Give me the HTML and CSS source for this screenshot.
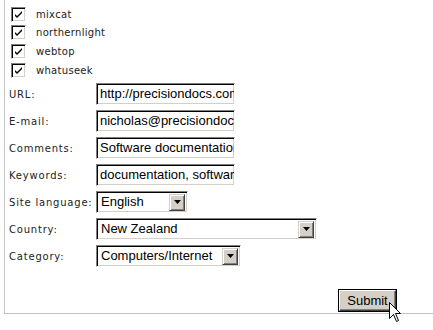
FILE: index.html
```html
<!DOCTYPE html>
<html lang="en">
<head>
    <meta charset="UTF-8">
    <title>Submit site</title>
    <link rel="stylesheet" href="styles.css">
</head>
<body>
    <div class="painel">
        <div class="engines">
            <div class="engine"><span class="caixa"><svg width="9" height="9" viewBox="0 0 9 9"><path d="M1 4 L3 6 L8 1 L8 3 L3 8 L1 6 Z" fill="#000"/></svg></span>mixcat</div>
            <div class="engine"><span class="caixa"><svg width="9" height="9" viewBox="0 0 9 9"><path d="M1 4 L3 6 L8 1 L8 3 L3 8 L1 6 Z" fill="#000"/></svg></span>northernlight</div>
            <div class="engine"><span class="caixa"><svg width="9" height="9" viewBox="0 0 9 9"><path d="M1 4 L3 6 L8 1 L8 3 L3 8 L1 6 Z" fill="#000"/></svg></span>webtop</div>
            <div class="engine"><span class="caixa"><svg width="9" height="9" viewBox="0 0 9 9"><path d="M1 4 L3 6 L8 1 L8 3 L3 8 L1 6 Z" fill="#000"/></svg></span>whatuseek</div>
        </div>

        <div class="campos">
            <div class="linha">
                <label>URL:</label>
                <div class="texto">http://precisiondocs.com</div>
            </div>
            <div class="linha">
                <label>E-mail:</label>
                <div class="texto">nicholas@precisiondocs.com</div>
            </div>
            <div class="linha">
                <label>Comments:</label>
                <div class="texto">Software documentation services</div>
            </div>
            <div class="linha">
                <label>Keywords:</label>
                <div class="texto">documentation, software, manuals</div>
            </div>
            <div class="linha">
                <label>Site language:</label>
                <div class="lista idioma"><span>English</span><span class="seta"><svg width="7" height="4" viewBox="0 0 7 4"><path d="M0 0 H7 L3.5 4 Z" fill="#000"/></svg></span></div>
            </div>
            <div class="linha">
                <label>Country:</label>
                <div class="lista pais"><span>New Zealand</span><span class="seta"><svg width="7" height="4" viewBox="0 0 7 4"><path d="M0 0 H7 L3.5 4 Z" fill="#000"/></svg></span></div>
            </div>
            <div class="linha">
                <label>Category:</label>
                <div class="lista categoria"><span>Computers/Internet</span><span class="seta"><svg width="7" height="4" viewBox="0 0 7 4"><path d="M0 0 H7 L3.5 4 Z" fill="#000"/></svg></span></div>
            </div>
        </div>

        <div class="rodape">
            <div class="botao"><span>Submit</span></div>
        </div>
    </div>

    <svg class="cursor" width="13" height="21" viewBox="0 0 13 21"><path d="M0.5 0.5 V16.5 L4.5 12.5 L7.5 19.5 L9.5 18.5 L6.5 11.5 H11.5 Z" fill="#fff" stroke="#000" stroke-width="1"/></svg>
</body>
</html>
```

FILE: styles.css
```css
body {
    margin: 0;
    background: #fff;
    width: 433px;
    height: 330px;
    overflow: hidden;
    position: relative;
}

.painel {
    margin-left: 4px;
    height: 313px;
    border-left: 1px solid #c4c4c4;
    border-bottom: 1px solid #c4c4c4;
    font-family: "DejaVu Sans", Verdana, sans-serif;
    font-size: 10px;
    color: #222;
}

.engines {
    padding-top: 5px;
    padding-left: 6px;
    letter-spacing: 0.3px;
}

.engine {
    display: flex;
    align-items: center;
    height: 18.6px;
}

.caixa {
    width: 9px;
    height: 9px;
    background: #fff;
    border: 1px solid;
    border-color: #808080 #fff #fff #808080;
    box-shadow: inset 1px 1px #000, inset -1px -1px #d4d0c8;
    padding: 2px;
    margin-right: 10px;
    display: flex;
}

.campos {
    margin-top: 4px;
    display: flex;
    flex-direction: column;
    gap: 5px;
}

.linha {
    display: flex;
    align-items: center;
    height: 22px;
}

.linha label {
    width: 87px;
    padding-left: 4px;
    letter-spacing: 0.8px;
    white-space: nowrap;
}

.texto,
.lista {
    height: 22px;
    box-sizing: border-box;
    border: 1px solid;
    border-color: #808080 #fff #fff #808080;
    box-shadow: inset 1px 1px #000, inset -1px -1px #d4d0c8;
    font-family: "Liberation Sans", Arial, sans-serif;
    font-size: 13px;
    color: #000;
    background: #fff;
}

.texto {
    width: 139px;
    padding: 2px 0 0 3px;
    white-space: nowrap;
    overflow: hidden;
    line-height: 16px;
}

.lista {
    display: flex;
    align-items: center;
    justify-content: space-between;
    padding: 2px;
    line-height: 16px;
}

.lista span:first-child {
    padding-left: 2px;
}

.idioma { width: 92px; }
.pais { width: 221px; }
.categoria { width: 145px; }

.seta {
    width: 16px;
    height: 17px;
    box-sizing: border-box;
    background: #d4d0c8;
    border: 1px solid;
    border-color: #d4d0c8 #404040 #404040 #d4d0c8;
    box-shadow: inset 1px 1px #fff, inset -1px -1px #808080;
    display: flex;
    align-items: center;
    justify-content: center;
}

.rodape {
    display: flex;
    justify-content: flex-end;
    padding-right: 36px;
    margin-top: 22px;
}

.botao {
    width: 59px;
    height: 23px;
    box-sizing: border-box;
    border: 1px solid #000;
    display: flex;
}

.botao span {
    flex: 1;
    background: #d4d0c8;
    border: 1px solid;
    border-color: #fff #404040 #404040 #fff;
    box-shadow: inset -1px -1px #808080;
    font-family: "Liberation Sans", Arial, sans-serif;
    font-size: 13px;
    color: #000;
    display: flex;
    align-items: center;
    justify-content: center;
}

.cursor {
    position: absolute;
    left: 389px;
    top: 302px;
}
```
